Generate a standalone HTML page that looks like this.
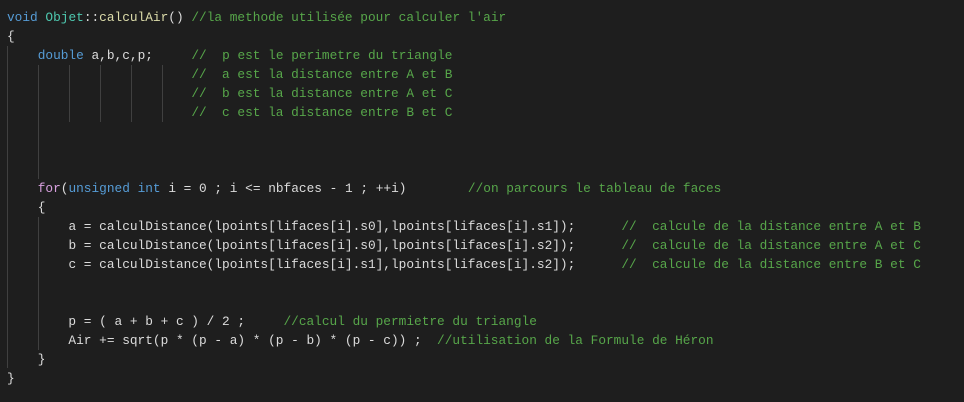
<!DOCTYPE html>
<html><head><meta charset="utf-8"><style>
html,body{margin:0;padding:0;background:#1e1e1e;width:964px;height:402px;overflow:hidden}
.l{position:absolute;left:7px;height:19px;line-height:19px;white-space:pre;font-family:"Liberation Mono",monospace;font-size:12.8px;color:#dcdcdc}
.k{color:#569cd6}.t{color:#4ec9b0}.f{color:#dcdcaa}.v{color:#dcdcdc}.c{color:#57a64a}.n{color:#dcdcdc}.p{color:#d8a0df}
.g{position:absolute;width:1px;background:#404040}
</style></head><body>
<div class="g" style="left:7px;top:46px;height:322px"></div>
<div class="g" style="left:38px;top:65px;height:114px"></div>
<div class="g" style="left:69px;top:65px;height:57px"></div>
<div class="g" style="left:100px;top:65px;height:57px"></div>
<div class="g" style="left:131px;top:65px;height:57px"></div>
<div class="g" style="left:162px;top:65px;height:57px"></div>
<div class="g" style="left:38px;top:217px;height:133px"></div>

<div class="l" style="top:8px"><span class="k">void</span> <span class="t">Objet</span>::<span class="f">calculAir</span>() <span class="c">//la methode utilisée pour calculer l'air</span></div>
<div class="l" style="top:27px">{</div>
<div class="l" style="top:46px">    <span class="k">double</span> <span class="v">a</span>,<span class="v">b</span>,<span class="v">c</span>,<span class="v">p</span>;     <span class="c">//  p est le perimetre du triangle</span></div>
<div class="l" style="top:65px">                        <span class="c">//  a est la distance entre A et B</span></div>
<div class="l" style="top:84px">                        <span class="c">//  b est la distance entre A et C</span></div>
<div class="l" style="top:103px">                        <span class="c">//  c est la distance entre B et C</span></div>
<div class="l" style="top:179px">    <span class="p">for</span>(<span class="k">unsigned</span> <span class="k">int</span> <span class="v">i</span> = <span class="n">0</span> ; <span class="v">i</span> &lt;= <span class="v">nbfaces</span> - <span class="n">1</span> ; ++<span class="v">i</span>)        <span class="c">//on parcours le tableau de faces</span></div>
<div class="l" style="top:198px">    {</div>
<div class="l" style="top:217px">        <span class="v">a</span> = calculDistance(lpoints[lifaces[i].s0],lpoints[lifaces[i].s1]);      <span class="c">//  calcule de la distance entre A et B</span></div>
<div class="l" style="top:236px">        <span class="v">b</span> = calculDistance(lpoints[lifaces[i].s0],lpoints[lifaces[i].s2]);      <span class="c">//  calcule de la distance entre A et C</span></div>
<div class="l" style="top:255px">        <span class="v">c</span> = calculDistance(lpoints[lifaces[i].s1],lpoints[lifaces[i].s2]);      <span class="c">//  calcule de la distance entre B et C</span></div>
<div class="l" style="top:312px">        p = ( a + b + c ) / 2 ;     <span class="c">//calcul du permietre du triangle</span></div>
<div class="l" style="top:331px">        Air += sqrt(p * (p - a) * (p - b) * (p - c)) ;  <span class="c">//utilisation de la Formule de Héron</span></div>
<div class="l" style="top:350px">    }</div>
<div class="l" style="top:369px">}</div>
</body></html>
